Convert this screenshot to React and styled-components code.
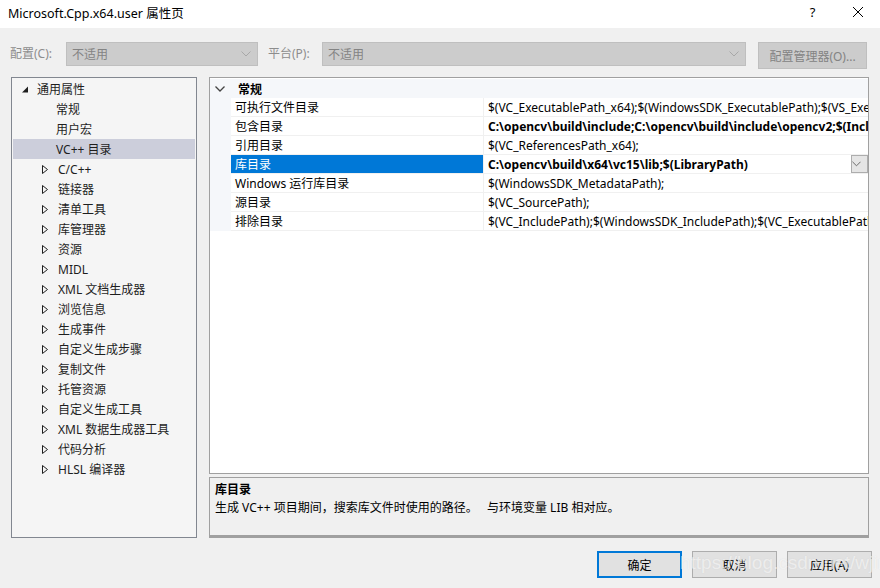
import React from "react";
import styled, { createGlobalStyle, css } from "styled-components";

const Global = createGlobalStyle`
  html, body { margin: 0; padding: 0; background: #f0f0f0; }
  body { font-family: "Noto Sans", "Noto Sans CJK SC", sans-serif; font-size: 12px; color: #000; }
  * { box-sizing: border-box; }
`;

const Window = styled.div`
  position: relative;
  width: 880px;
  height: 588px;
  display: flex;
  flex-direction: column;
  background: #f0f0f0;
  overflow: hidden;
`;

const TitleBar = styled.div`
  height: 28px;
  background: #fff;
  display: flex;
  align-items: center;
  padding: 0 0 4px 8px;
  font-size: 12.5px;
`;
const Title = styled.div`flex: 1;`;
const TitleBtn = styled.div`
  width: 45px;
  display: flex;
  justify-content: center;
  align-items: center;
  font-size: 13px;
`;

const ConfigRow = styled.div`
  margin-top: 14px;
  height: 26px;
  display: flex;
  align-items: flex-start;
  padding-left: 10px;
`;
const Label = styled.div`
  color: #8d8d8d;
  height: 24px;
  line-height: 24px;
  width: ${p => p.$w}px;
`;
const Combo = styled.div`
  width: ${p => p.$w}px;
  height: 24px;
  background: #cccccc;
  border: 1px solid #bfbfbf;
  color: #838383;
  display: flex;
  align-items: center;
  padding-left: 5px;
  margin-right: ${p => p.$mr}px;
`;
const ComboText = styled.div`flex: 1;`;
const Chevron = styled.svg`
  width: 10px;
  height: 6px;
  margin-right: 6px;
`;
const DisabledButton = styled.div`
  width: 109px;
  height: 27px;
  background: #cccccc;
  border: 1px solid #bfbfbf;
  color: #838383;
  display: flex;
  align-items: center;
  justify-content: center;
`;

const Main = styled.div`
  margin-top: 9px;
  height: 461px;
  display: flex;
  padding-left: 11px;
`;

const Tree = styled.div`
  width: 186px;
  border: 1px solid #828790;
  background: #f5f5f5;
  margin-right: 12px;
  padding-top: 1px;
`;
const TreeRow = styled.div`
  height: 20px;
  display: flex;
  align-items: center;
  margin: 0 1px;
  padding-left: ${p => p.$indent}px;
  color: #1e1e1e;
  background: ${p => (p.$selected ? "#cccedb" : "transparent")};
`;
const Expander = styled.svg`
  width: 8px;
  height: 9px;
  margin-right: ${p => p.$mr}px;
`;

const RightCol = styled.div`
  width: 660px;
  display: flex;
  flex-direction: column;
  gap: 3px;
`;

const Grid = styled.div`
  height: 399px;
  border: 1px solid #a0a0a0;
  background: #fff;
  overflow: hidden;
  padding-top: 1px;
`;
const CategoryRow = styled.div`
  height: 19px;
  display: flex;
  align-items: center;
  background: #f5f7fa;
  font-weight: bold;
`;
const CatChevron = styled.svg`
  width: 10px;
  height: 6px;
  margin: 0 13px 0 5px;
`;
const PropRow = styled.div`
  display: flex;
  height: 19px;
  background: #f5f7fa;
`;
const Gutter = styled.div`width: 21px; flex: none;`;
const NameCell = styled.div`
  width: 253px;
  flex: none;
  padding-left: 4px;
  display: flex;
  align-items: center;
  border-bottom: 1px solid #f0f0f0;
  border-right: 1px solid #f0f0f0;
  ${p => p.$selected ? css`background: #0078d7; color: #fff;` : css`background: #fff;`}
`;
const ValueCell = styled.div`
  flex: 1;
  min-width: 0;
  background: #fff;
  padding-left: 4px;
  display: flex;
  align-items: center;
  white-space: nowrap;
  overflow: hidden;
  border-bottom: 1px solid #f0f0f0;
  font-weight: ${p => (p.$bold ? "bold" : "normal")};
`;
const ValueText = styled.div`flex: 1; overflow: hidden;`;
const DropBtn = styled.div`
  width: 17px;
  height: 18px;
  flex: none;
  border: 1px solid #adadad;
  background: #e5e5e5;
  display: flex;
  align-items: center;
  justify-content: center;
`;

const Desc = styled.div`
  height: 61px;
  border: 1px solid #a0a0a0;
  border-bottom-width: 3px;
  padding: 4px 5px;
  line-height: 19px;
  background: #f0f0f0;
`;
const DescTitle = styled.div`font-weight: bold; line-height: 16px;`;
const DescText = styled.div`white-space: pre;`;

const Footer = styled.div`
  margin-top: 13px;
  display: flex;
  justify-content: flex-end;
  gap: 10px;
  padding-right: 8px;
`;
const Button = styled.div`
  width: 85px;
  height: 27px;
  background: #e1e1e1;
  border: ${p => (p.$default ? "2px solid #0078d7" : "1px solid #adadad")};
  display: flex;
  align-items: center;
  justify-content: center;
  color: #000;
`;

const Watermark = styled.div`
  position: absolute;
  left: 680px;
  top: 552px;
  font-family: "Liberation Sans", sans-serif;
  font-size: 19px;
  color: rgba(255, 255, 255, 0.6);
  text-shadow: 0 0 1px rgba(180,180,180,0.35);
  pointer-events: none;
`;

const Down = ({ color = "#606060" }) => (
  <Chevron viewBox="0 0 10 6"><path d="M0.5 0.5 L5 5 L9.5 0.5" fill="none" stroke={color} strokeWidth="1" /></Chevron>
);

const Outline = () => (
  <Expander viewBox="0 0 8 9" $mr={9}><path d="M1.5 0.5 L6.5 4.5 L1.5 8.5 Z" fill="none" stroke="#1e1e1e" strokeWidth="1" /></Expander>
);
const Filled = () => (
  <Expander viewBox="0 0 8 9" $mr={8}><path d="M1 7.5 L7 7.5 L7 1.5 Z" fill="#1e1e1e" /></Expander>
);

const children = ["常规", "用户宏", "VC++ 目录"];
const groups = ["C/C++", "链接器", "清单工具", "库管理器", "资源", "MIDL", "XML 文档生成器", "浏览信息", "生成事件", "自定义生成步骤", "复制文件", "托管资源", "自定义生成工具", "XML 数据生成器工具", "代码分析", "HLSL 编译器"];

const props = [
  ["可执行文件目录", "$(VC_ExecutablePath_x64);$(WindowsSDK_ExecutablePath);$(VS_ExecutablePath);$(MSBuild_ExecutablePath)", false],
  ["包含目录", "C:\\opencv\\build\\include;C:\\opencv\\build\\include\\opencv2;$(IncludePath)", true],
  ["引用目录", "$(VC_ReferencesPath_x64);", false],
  ["库目录", "C:\\opencv\\build\\x64\\vc15\\lib;$(LibraryPath)", true, true],
  ["Windows 运行库目录", "$(WindowsSDK_MetadataPath);", false],
  ["源目录", "$(VC_SourcePath);", false],
  ["排除目录", "$(VC_IncludePath);$(WindowsSDK_IncludePath);$(VC_ExecutablePath_x64);$(VC_LibraryPath_x64)", false],
];

export default function App() {
  return (
    <Window>
      <Global />
      <TitleBar>
        <Title>Microsoft.Cpp.x64.user 属性页</Title>
        <TitleBtn>?</TitleBtn>
        <TitleBtn>
          <svg width="12" height="12" viewBox="0 0 12 12"><path d="M1 1 L11 11 M11 1 L1 11" stroke="#000" strokeWidth="1" /></svg>
        </TitleBtn>
      </TitleBar>
      <ConfigRow>
        <Label $w={56}>配置(C):</Label>
        <Combo $w={192} $mr={10}><ComboText>不适用</ComboText><Down color="#a8a8a8" /></Combo>
        <Label $w={54}>平台(P):</Label>
        <Combo $w={424} $mr={12}><ComboText>不适用</ComboText><Down color="#a8a8a8" /></Combo>
        <DisabledButton>配置管理器(O)...</DisabledButton>
      </ConfigRow>
      <Main>
        <Tree>
          <TreeRow $indent={8}><Filled />通用属性</TreeRow>
          {children.map(c => (
            <TreeRow key={c} $indent={43} $selected={c === "VC++ 目录"}>{c}</TreeRow>
          ))}
          {groups.map(g => (
            <TreeRow key={g} $indent={28}><Outline />{g}</TreeRow>
          ))}
        </Tree>
        <RightCol>
          <Grid>
            <CategoryRow>
              <CatChevron viewBox="0 0 10 6"><path d="M0.5 0.5 L5 5 L9.5 0.5" fill="none" stroke="#444" strokeWidth="1.3" /></CatChevron>
              常规
            </CategoryRow>
            {props.map(([n, v, bold, sel]) => (
              <PropRow key={n}>
                <Gutter />
                <NameCell $selected={sel}>{n}</NameCell>
                <ValueCell $bold={bold}>
                  <ValueText>{v}</ValueText>
                  {sel && <DropBtn><Down color="#606060" /></DropBtn>}
                </ValueCell>
              </PropRow>
            ))}
          </Grid>
          <Desc>
            <DescTitle>库目录</DescTitle>
            <DescText>生成 VC++ 项目期间，搜索库文件时使用的路径。   与环境变量 LIB 相对应。</DescText>
          </Desc>
        </RightCol>
      </Main>
      <Footer>
        <Button $default>确定</Button>
        <Button>取消</Button>
        <Button>应用(A)</Button>
      </Footer>
      <Watermark>https://blog.csdn.net/wjinjie</Watermark>
    </Window>
  );
}
